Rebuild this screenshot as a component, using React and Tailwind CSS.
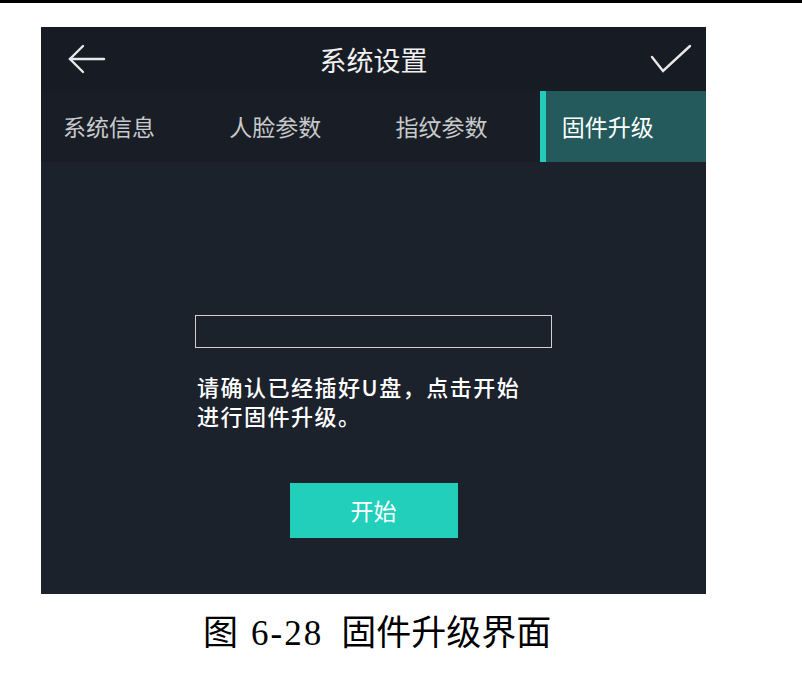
import React from "react";

const tabs = ["系统信息", "人脸参数", "指纹参数", "固件升级"];

const App = () => {
  return (
    <div className="w-[802px] h-[675px] bg-white overflow-hidden">
      <div className="h-[3px] bg-black" />
      <div
        className="ml-[41px] mt-[24px] w-[665px] flex flex-col bg-[#1b2029]"
        style={{ fontFamily: '"Noto Sans CJK SC", "Noto Sans", sans-serif' }}
      >
        {/* Header */}
        <div className="h-[64px] grid grid-cols-[1fr_auto_1fr] items-center px-[14px] bg-[#171b23] text-white">
          <svg className="justify-self-start ml-[13px]" width="38" height="32" viewBox="0 0 38 32" fill="none" stroke="#e8e8e8" strokeWidth="2.4" strokeLinecap="round">
            <path d="M2 16 H36" />
            <path d="M15 3 L2 16 L15 29" />
          </svg>
          <h1 className="text-[27px] leading-none text-[#f0f0f0]">系统设置</h1>
          <svg className="justify-self-end" width="42" height="30" viewBox="0 0 42 30" fill="none" stroke="#e8e8e8" strokeWidth="2.4" strokeLinecap="round">
            <path d="M2 13 L13 27 L40 2" />
          </svg>
        </div>

        {/* Tabs */}
        <div className="h-[71px] flex bg-[#191e26]">
          {tabs.map((t, i) =>
            i === 3 ? (
              <div key={t} className="flex-1 flex items-center bg-[#245a5c] border-l-[6px] border-[#22ccb8] pl-[16px] text-[23px] text-white">
                {t}
              </div>
            ) : (
              <div key={t} className="flex-1 flex items-center pl-[22px] text-[23px] text-[#c8c9cb]">
                {t}
              </div>
            )
          )}
        </div>

        {/* Body */}
        <div className="flex flex-col items-center pt-[153px] pb-[56px] bg-[#1c222b]">
          <div className="w-[357px] h-[33px] border border-[#d0d0d0]" />
          <p className="w-[357px] mt-[24px] pl-[2px] text-[22px] leading-[29px] tracking-[1.5px] font-medium text-white">
            请确认已经插好U盘，点击开始
            <br />
            进行固件升级。
          </p>
          <button className="mt-[53px] w-[168px] h-[55px] bg-[#22cfbb] text-white text-[23px]">
            开始
          </button>
        </div>
      </div>

      {/* Caption */}
      <div className="mt-[16px] ml-[203px] h-[40px] text-[35px] leading-[40px] text-black flex items-baseline">
        <span style={{ fontFamily: '"Noto Sans CJK SC", sans-serif' }}>图</span>
        <span className="ml-[13px] mr-[18px] tracking-[2px]" style={{ fontFamily: '"Liberation Serif", serif' }}>6-28</span>
        <span style={{ fontFamily: '"Noto Sans CJK SC", sans-serif' }}>固件升级界面</span>
      </div>
    </div>
  );
};

export default App;
